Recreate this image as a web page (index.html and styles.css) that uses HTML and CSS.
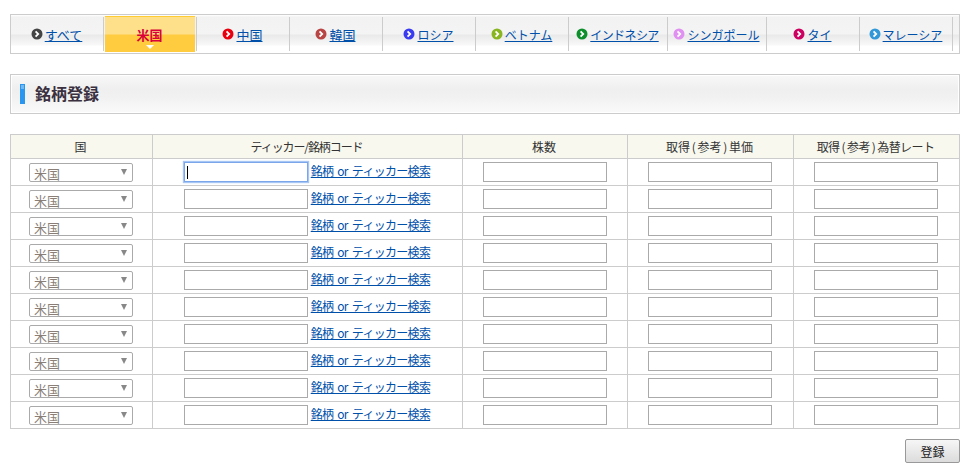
FILE: index.html
```html
<!DOCTYPE html>
<html lang="ja">
<head>
    <meta charset="utf-8">
    <title>銘柄登録</title>
    <link rel="stylesheet" href="styles.css">
</head>
<body>
    <svg class="defs" width="0" height="0">
        <symbol id="arrow" viewBox="0 0 12 12">
            <circle cx="6" cy="6" r="5.5" fill="currentColor"/>
            <path d="M4.6 3.4 L7.2 6 L4.6 8.6" fill="none" stroke="#fff" stroke-width="1.8"/>
        </symbol>
    </svg>

    <ul class="tabs">
        <li class="tab"><svg class="dot c-all"><use href="#arrow"/></svg><a href="#">すべて</a></li>
        <li class="tab active"><span>米国</span></li>
        <li class="tab"><svg class="dot c-cn"><use href="#arrow"/></svg><a href="#">中国</a></li>
        <li class="tab"><svg class="dot c-kr"><use href="#arrow"/></svg><a href="#">韓国</a></li>
        <li class="tab kana"><svg class="dot c-ru"><use href="#arrow"/></svg><a href="#">ロシア</a></li>
        <li class="tab kana"><svg class="dot c-vn"><use href="#arrow"/></svg><a href="#">ベトナム</a></li>
        <li class="tab kana wide tight"><svg class="dot c-id"><use href="#arrow"/></svg><a href="#">インドネシア</a></li>
        <li class="tab kana wide"><svg class="dot c-sg"><use href="#arrow"/></svg><a href="#">シンガポール</a></li>
        <li class="tab kana"><svg class="dot c-th"><use href="#arrow"/></svg><a href="#">タイ</a></li>
        <li class="tab kana"><svg class="dot c-my"><use href="#arrow"/></svg><a href="#">マレーシア</a></li>
    </ul>

    <div class="title"><h1>銘柄登録</h1></div>

    <table class="stocks">
        <tr>
            <th class="col-country">国</th>
            <th class="col-ticker">ティッカー/銘柄コード</th>
            <th class="col-num">株数</th>
            <th class="col-num2">取得<span class="paren">(</span>参考<span class="paren">)</span>単価</th>
            <th class="col-rate">取得<span class="paren">(</span>参考<span class="paren">)</span>為替レート</th>
        </tr>
        <tr>
            <td><div class="select">米国</div></td>
            <td class="ticker"><input type="text" class="field focused"> <a href="#">銘柄 or ティッカー検索</a></td>
            <td><input type="text" class="field"></td>
            <td><input type="text" class="field"></td>
            <td><input type="text" class="field"></td>
        </tr>
        <tr>
            <td><div class="select">米国</div></td>
            <td class="ticker"><input type="text" class="field"> <a href="#">銘柄 or ティッカー検索</a></td>
            <td><input type="text" class="field"></td>
            <td><input type="text" class="field"></td>
            <td><input type="text" class="field"></td>
        </tr>
        <tr>
            <td><div class="select">米国</div></td>
            <td class="ticker"><input type="text" class="field"> <a href="#">銘柄 or ティッカー検索</a></td>
            <td><input type="text" class="field"></td>
            <td><input type="text" class="field"></td>
            <td><input type="text" class="field"></td>
        </tr>
        <tr>
            <td><div class="select">米国</div></td>
            <td class="ticker"><input type="text" class="field"> <a href="#">銘柄 or ティッカー検索</a></td>
            <td><input type="text" class="field"></td>
            <td><input type="text" class="field"></td>
            <td><input type="text" class="field"></td>
        </tr>
        <tr>
            <td><div class="select">米国</div></td>
            <td class="ticker"><input type="text" class="field"> <a href="#">銘柄 or ティッカー検索</a></td>
            <td><input type="text" class="field"></td>
            <td><input type="text" class="field"></td>
            <td><input type="text" class="field"></td>
        </tr>
        <tr>
            <td><div class="select">米国</div></td>
            <td class="ticker"><input type="text" class="field"> <a href="#">銘柄 or ティッカー検索</a></td>
            <td><input type="text" class="field"></td>
            <td><input type="text" class="field"></td>
            <td><input type="text" class="field"></td>
        </tr>
        <tr>
            <td><div class="select">米国</div></td>
            <td class="ticker"><input type="text" class="field"> <a href="#">銘柄 or ティッカー検索</a></td>
            <td><input type="text" class="field"></td>
            <td><input type="text" class="field"></td>
            <td><input type="text" class="field"></td>
        </tr>
        <tr>
            <td><div class="select">米国</div></td>
            <td class="ticker"><input type="text" class="field"> <a href="#">銘柄 or ティッカー検索</a></td>
            <td><input type="text" class="field"></td>
            <td><input type="text" class="field"></td>
            <td><input type="text" class="field"></td>
        </tr>
        <tr>
            <td><div class="select">米国</div></td>
            <td class="ticker"><input type="text" class="field"> <a href="#">銘柄 or ティッカー検索</a></td>
            <td><input type="text" class="field"></td>
            <td><input type="text" class="field"></td>
            <td><input type="text" class="field"></td>
        </tr>
        <tr>
            <td><div class="select">米国</div></td>
            <td class="ticker"><input type="text" class="field"> <a href="#">銘柄 or ティッカー検索</a></td>
            <td><input type="text" class="field"></td>
            <td><input type="text" class="field"></td>
            <td><input type="text" class="field"></td>
        </tr>
    </table>

    <div class="actions"><button class="submit">登録</button></div>
</body>
</html>
```

FILE: styles.css
```css
* {
    box-sizing: border-box;
}
body {
    width: 960px;
    margin: 0;
    padding: 14px 0 0 10px;
    font-family: "Noto Sans CJK JP", "Liberation Sans", sans-serif;
    font-size: 12px;
    color: #333;
    background: #fff;
}
a {
    color: #0050aa;
}
.defs {
    position: absolute;
}

/* country tabs */
.tabs {
    display: flex;
    height: 40px;
    margin: 0;
    padding: 2px 0 1px 0;
    list-style: none;
    border: 1px solid #ccc;
    background: linear-gradient(#fff 0, #f2f2f2 2px, #f4f4f4 19px, #e9e9e9 20px, #f8f8f8 30px, #fff 31px);
}
.tab {
    flex: none;
    display: flex;
    align-items: center;
    justify-content: center;
    gap: 2px;
    width: 93px;
    height: 34px;
    padding: 0 1px 0 0;
    font-size: 13px;
    white-space: nowrap;
    border-right: 1px solid #ccc;
}
.tab.kana {
    font-size: 12px;
}
.tab.wide {
    width: 99px;
}
.tab.tight {
    letter-spacing: -0.6px;
}
.tab.active {
    position: relative;
    margin: -1px 1px 0 1px;
    width: 90px;
    height: 36px;
    border-right: 0;
    border-top: 1px solid #fc3;
    font-weight: bold;
    color: #d9003c;
    background: linear-gradient(#fee08a 0, #fee08a 17px, #ffcc40 18px);
}
.tab.active::after {
    content: "";
    position: absolute;
    left: 41px;
    bottom: 3px;
    border: 4px solid transparent;
    border-top-color: #fff;
    border-bottom-width: 0;
}
.tab.active + .tab {
    width: 94px;
    border-left: 1px solid #ccc;
}
.dot {
    flex: none;
    width: 12px;
    height: 12px;
}
.c-all { color: #444; }
.c-cn { color: #e8000f; }
.c-kr { color: #b84444; }
.c-ru { color: #3a3af0; }
.c-vn { color: #88b520; }
.c-id { color: #0d8f2c; }
.c-sg { color: #e090f0; }
.c-th { color: #cc0060; }
.c-my { color: #3398d8; }

/* heading */
.title {
    height: 40px;
    margin-top: 20px;
    padding: 9px 0 0 9px;
    border: 1px solid #ccc;
    box-shadow: inset 0 0 0 1px #fff;
    background: linear-gradient(#f8f8f8 0, #efefef 14px, #f1f1f1 22px, #f9f9f9 36px);
}
.title h1 {
    height: 20px;
    margin: 0;
    padding-left: 15px;
    font-size: 16px;
    line-height: 19px;
    font-weight: bold;
    color: #3a3040;
    background:
        linear-gradient(#6db8f5, #6db8f5) 1px 1px / 3px 4px no-repeat,
        linear-gradient(#2b96f0, #2b96f0) 0 0 / 5px 20px no-repeat;
}

/* registration table */
.stocks {
    width: 950px;
    margin-top: 20px;
    table-layout: fixed;
    border-collapse: collapse;
}
.stocks th,
.stocks td {
    padding: 0;
    border: 1px solid #ccc;
    text-align: center;
}
.stocks th {
    height: 24px;
    padding-right: 2px;
    font-weight: normal;
    background: #f8f8ee;
}
.stocks td {
    height: 27px;
}
.col-country {
    width: 142px;
}
.stocks .col-ticker {
    width: 310px;
    letter-spacing: -1.1px;
}
.col-num {
    width: 165px;
}
.col-num2 {
    width: 166px;
}
.col-rate {
    letter-spacing: -0.6px;
}
.paren {
    display: inline-block;
    width: 7.5px;
    text-align: center;
}
.select {
    position: relative;
    width: 104px;
    height: 19px;
    margin: 1px 0 0 18px;
    padding-left: 4px;
    font-size: 13px;
    line-height: 20px;
    text-align: left;
    color: #8a7f78;
    background: #fff;
    border: 1px solid #aaa;
    border-radius: 2px;
}
.select::after {
    content: "";
    position: absolute;
    top: 5px;
    right: 5px;
    border: 3px solid transparent;
    border-top: 6px solid #888;
    border-bottom-width: 0;
}
.field {
    display: block;
    width: 124px;
    height: 20px;
    margin: 0 0 0 20px;
    padding: 0;
    background: #fff;
    border: 1px solid #aaa;
}
.stocks .ticker {
    text-align: left;
    padding-left: 31px;
    white-space: nowrap;
}
.ticker .field {
    display: inline-block;
    margin: 0;
    vertical-align: top;
}
.ticker a {
    line-height: 18px;
    letter-spacing: -0.7px;
    word-spacing: 2px;
    vertical-align: top;
}
.field.focused {
    border-color: #7ba7ea;
    box-shadow: 0 0 1px 1px #a8c6f4;
    background: linear-gradient(#000, #000) 2px 3px / 1px 13px no-repeat;
}

.actions {
    display: flex;
    justify-content: flex-end;
    margin-top: 10px;
}
.submit {
    width: 55px;
    height: 24px;
    padding: 0;
    font-family: inherit;
    font-size: 12px;
    color: #222;
    border: 1px solid #999;
    border-radius: 2px;
    background: linear-gradient(#f6f6f6, #dcdcdc);
}
```
